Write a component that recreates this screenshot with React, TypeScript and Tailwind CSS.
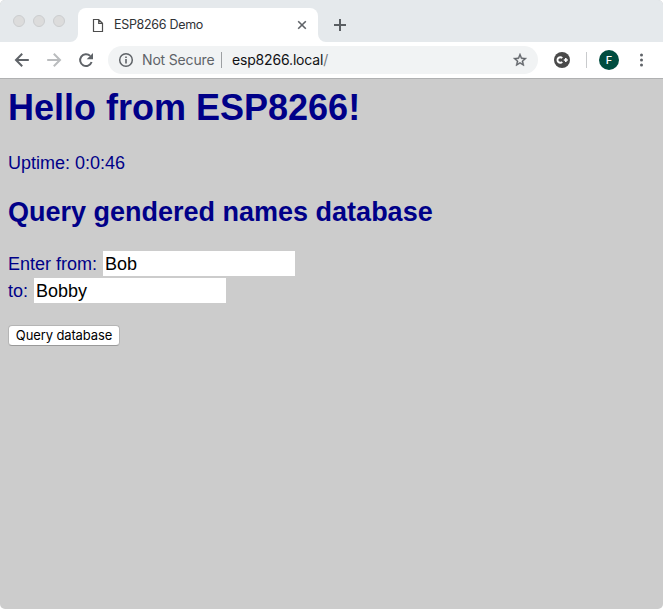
import React from "react";

function TabStrip() {
  return (
    <div className="flex h-[42px] items-end bg-[#e5e9ec]">
      <div className="flex h-[42px] w-[70px] items-center gap-2 pl-[13px]">
        <span className="size-3 rounded-full border border-[#cbcdcf] bg-[#dcdcdc]" />
        <span className="size-3 rounded-full border border-[#cbcdcf] bg-[#dcdcdc]" />
        <span className="size-3 rounded-full border border-[#cbcdcf] bg-[#dcdcdc]" />
      </div>
      <svg className="size-2 shrink-0" viewBox="0 0 8 8">
        <path d="M0 8A8 8 0 0 0 8 0V8Z" fill="#fff" />
      </svg>
      <div className="flex h-[34px] w-[240px] items-center rounded-t-lg bg-white pl-[14px] pr-[10px]">
        <svg className="h-[15px] w-3 shrink-0" viewBox="0 0 12 15" fill="none" stroke="#4d4d4d" strokeWidth="1.2">
          <path d="M1.5 1.5h5.2l3.8 3.8v8.2h-9zM6.7 1.5v3.8h3.8" />
        </svg>
        <span className="ml-[10px] w-[180px] whitespace-nowrap text-[12.5px] leading-4 tracking-[-0.3px] text-[#303336]">ESP8266 Demo</span>
        <svg className="ml-auto size-3 shrink-0" viewBox="0 0 12 12" stroke="#5f6368" strokeWidth="1.6">
          <path d="M2.2 2.2l7.6 7.6M9.8 2.2L2.2 9.8" />
        </svg>
      </div>
      <svg className="size-2 shrink-0" viewBox="0 0 8 8">
        <path d="M8 8A8 8 0 0 1 0 0V8Z" fill="#fff" />
      </svg>
      <svg className="mb-[11px] ml-2 size-3 shrink-0" viewBox="0 0 12 12" stroke="#5a5e62" strokeWidth="2">
        <path d="M6 0v12M0 6h12" />
      </svg>
    </div>
  );
}

function Toolbar() {
  return (
    <div className="flex h-[37px] items-center border-b border-[#b0b1b2] bg-white pl-[14px]">
      <svg className="size-4 shrink-0" viewBox="0 0 16 16" fill="none" stroke="#5f6368" strokeWidth="2">
        <path d="M14.8 8H2.4M8.2 1.8L2 8l6.2 6.2" />
      </svg>
      <svg className="ml-4 size-4 shrink-0" viewBox="0 0 16 16" fill="none" stroke="#babcbe" strokeWidth="2">
        <path d="M1.2 8h12.4M7.8 1.8L14 8l-6.2 6.2" />
      </svg>
      <svg className="ml-4 size-4 shrink-0" viewBox="0 0 16 16">
        <path d="M13.6 10A5.9 5.9 0 1 1 12.2 3.9" fill="none" stroke="#5f6368" strokeWidth="2" />
        <path d="M15 1v6.3H8.7z" fill="#5f6368" />
      </svg>
      <div className="ml-[14px] flex h-7 w-[430px] items-center rounded-full bg-[#f1f3f4] pl-[10px] pr-[10px] text-[14px] leading-5">
        <svg className="size-4 shrink-0" viewBox="0 0 16 16">
          <circle cx="8" cy="8" r="6.3" fill="none" stroke="#5f6368" strokeWidth="1.5" />
          <path d="M7.2 7h1.6v4.5H7.2zM7.2 4.4h1.6V6H7.2z" fill="#5f6368" />
        </svg>
        <span className="ml-2 w-[79px] whitespace-nowrap tracking-[-0.17px] text-[#5f6368]">Not Secure</span>
        <span className="h-4 w-px bg-[#9da0a3]" />
        <span className="ml-[10px] whitespace-nowrap tracking-[-0.17px] text-[#111214]">esp8266.local<span className="text-[#777b7f]">/</span></span>
        <svg className="ml-auto size-4 shrink-0" viewBox="0 0 24 24" fill="#5f6368">
          <path d="M22 9.24l-7.19-.62L12 2 9.19 8.63 2 9.24l5.46 4.73L5.82 21 12 17.27 18.18 21l-1.63-7.03L22 9.24zM12 15.4l-3.76 2.27 1-4.28-3.32-2.88 4.38-.38L12 6.1l1.71 4.04 4.38.38-3.32 2.88 1 4.28L12 15.4z" stroke="#5f6368" strokeWidth=".6" />
        </svg>
      </div>
      <svg className="ml-4 size-4 shrink-0" viewBox="0 0 16 16">
        <circle cx="8" cy="8" r="8" fill="#4a4a4a" />
        <path d="M8.2 6.2a2.7 2.7 0 1 0 0 3.6" fill="none" stroke="#fff" strokeWidth="1.9" />
        <path d="M11.8 6v4M9.8 8h4" stroke="#fff" strokeWidth="1.6" />
      </svg>
      <span className="ml-4 h-4 w-px bg-[#c9cbcd]" />
      <span className="ml-3 flex size-5 items-center justify-center rounded-full bg-[#004d40] text-[11px] font-medium leading-5 text-white">F</span>
      <svg className="ml-5 h-4 w-1 shrink-0" viewBox="0 0 4 16" fill="#5f6368">
        <circle cx="2.5" cy="3" r="1.5" />
        <circle cx="2.5" cy="8" r="1.5" />
        <circle cx="2.5" cy="13" r="1.5" />
      </svg>
    </div>
  );
}

export default function App() {
  return (
    <div className="h-[609px] w-[663px] bg-white">
      <div className="flex h-full flex-col overflow-hidden rounded-[5px] bg-[#cccccc] font-['Inter',sans-serif]">
        <TabStrip />
        <Toolbar />
        <main className="flex-1 px-2 pt-[9px] font-['Liberation_Sans',Arial,sans-serif] text-[18px] leading-5 text-[#000088]">
          <h1 className="text-[36px] font-bold leading-10">Hello from ESP8266!</h1>
          <p className="mt-[25px]">Uptime: 0:0:46</p>
          <h2 className="mt-6 text-[27px] font-bold leading-[30px]">Query gendered names database</h2>
          <form className="mt-6" onSubmit={(e) => e.preventDefault()}>
            <label className="flex items-center">
              <span className="w-[95px] whitespace-nowrap">Enter from:</span>
              <input className="h-[25px] w-[192px] bg-white px-[2px] pt-[2px] text-black outline-none" defaultValue="Bob" />
            </label>
            <label className="mt-[2px] flex items-center">
              <span className="w-[26px] whitespace-nowrap">to:</span>
              <input className="h-[25px] w-[192px] bg-white px-[2px] pt-[2px] text-black outline-none" defaultValue="Bobby" />
            </label>
            <button className="mt-[22px] flex h-[21px] w-28 items-center justify-center whitespace-nowrap rounded-[4px] border border-[#b5b5b5] border-b-[#999] bg-white pb-[2px] font-['Inter',sans-serif] text-[13px] leading-4 tracking-[-0.12px] text-black">
              Query database
            </button>
          </form>
        </main>
      </div>
    </div>
  );
}
